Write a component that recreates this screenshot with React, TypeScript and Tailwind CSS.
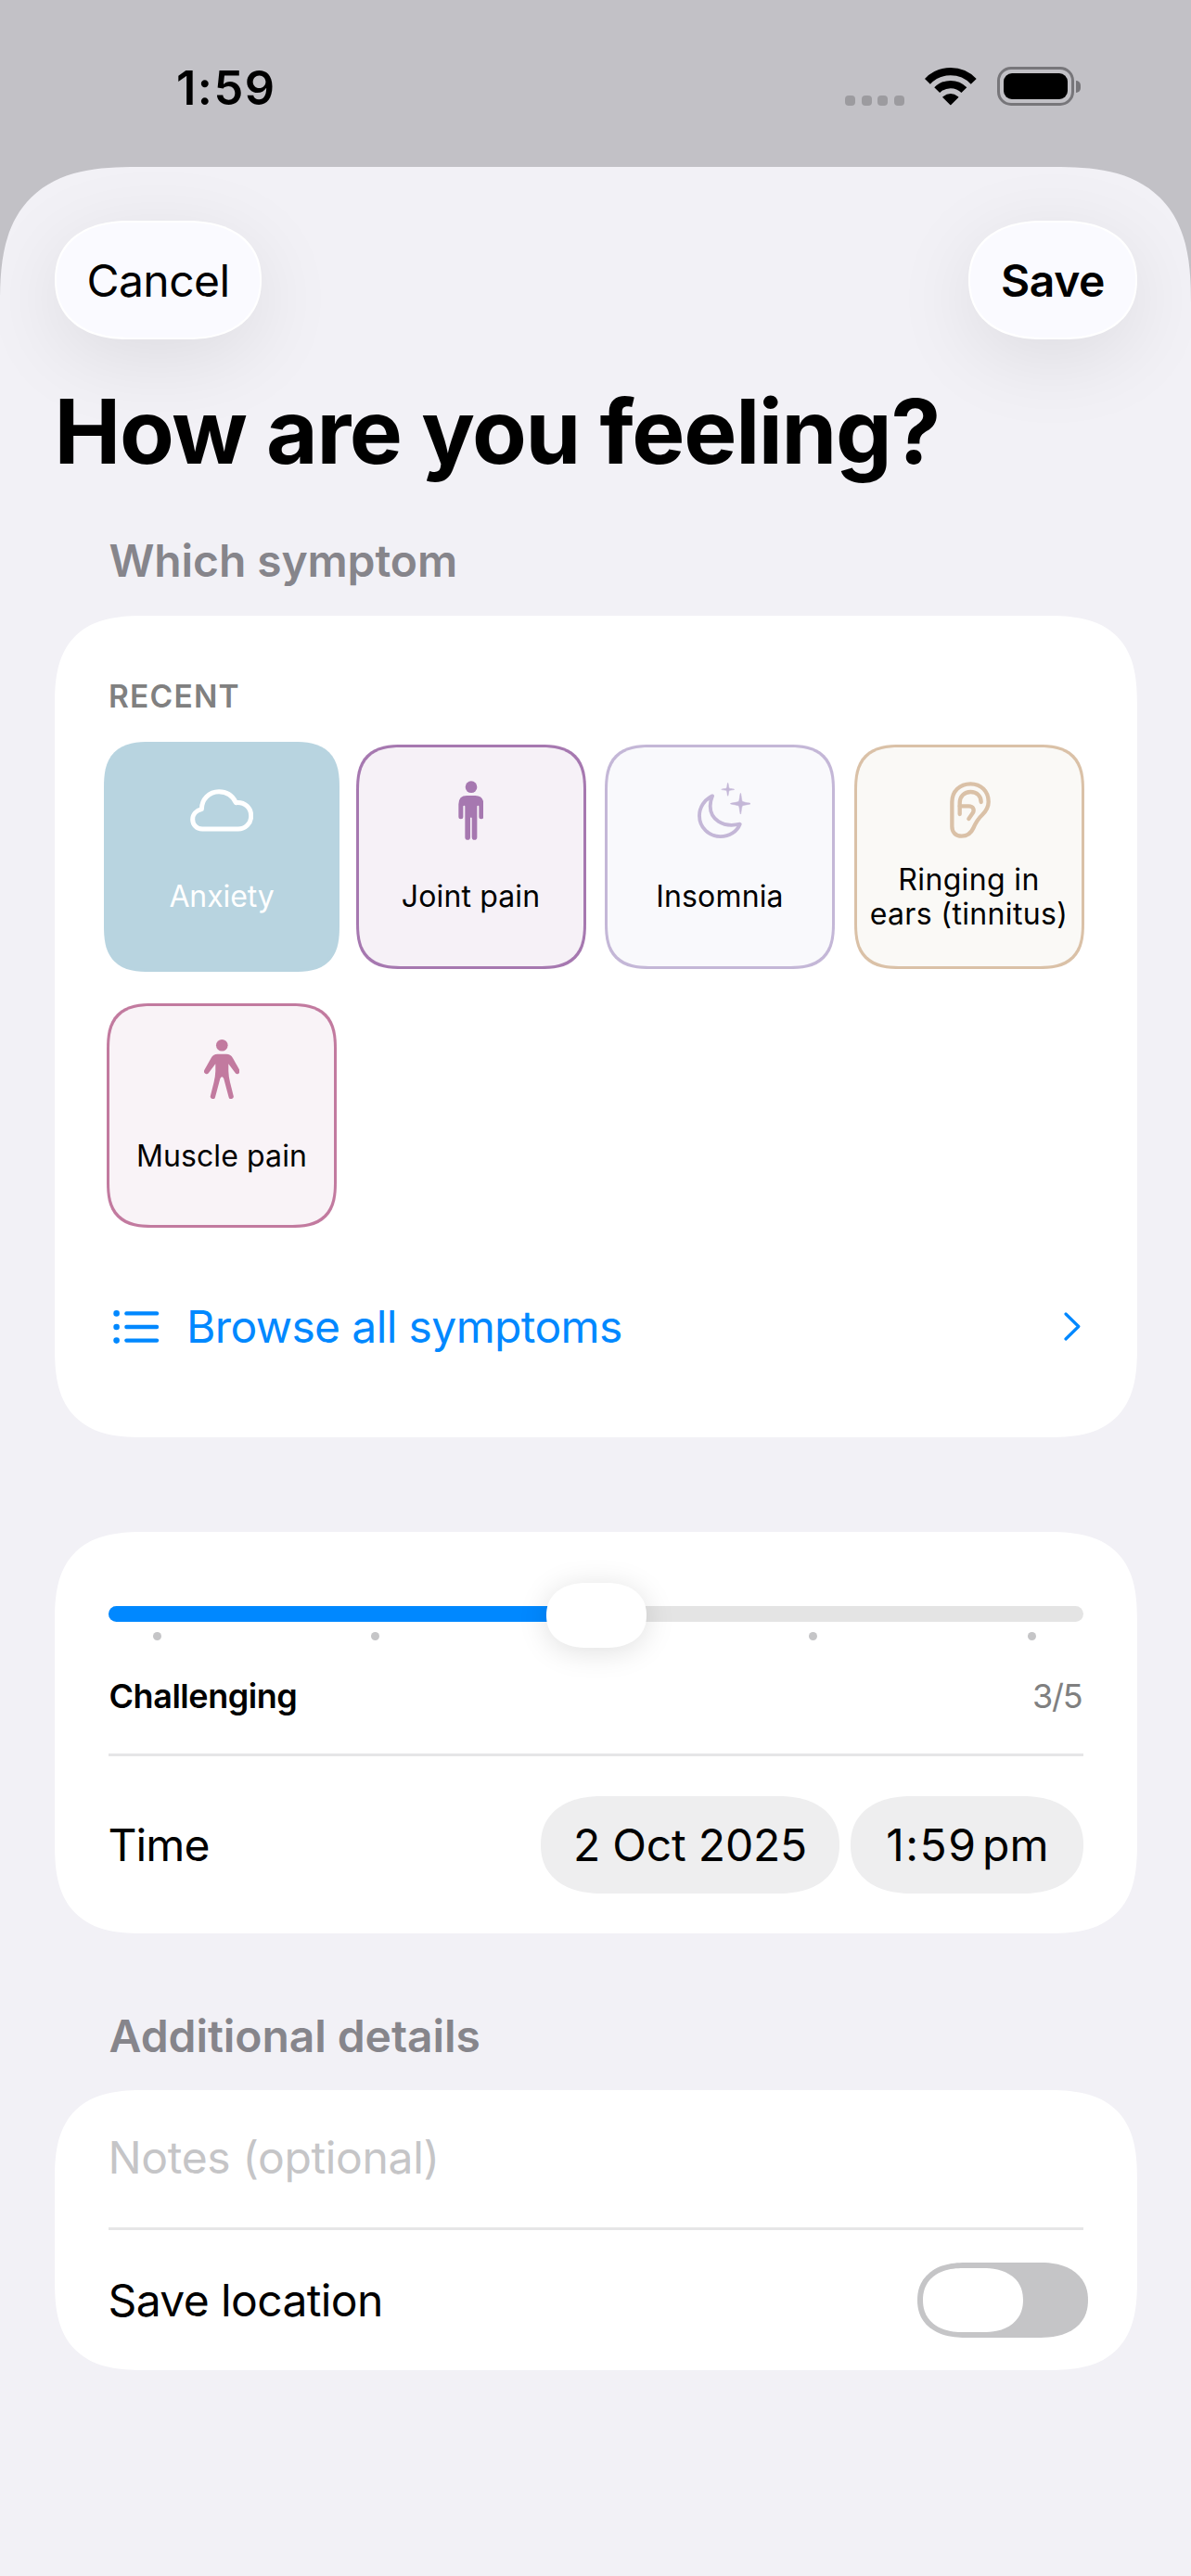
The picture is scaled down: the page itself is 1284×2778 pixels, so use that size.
import type { ReactNode } from "react";

const CloudIcon = () => (
  <svg width="68.4" height="45.7" viewBox="45 65 205 137" fill="none" stroke="currentColor" strokeWidth="15" strokeLinejoin="round">
    <path d="M84 194C66 194 53 180 53 163C53 147 65 134 82 130C82 98 106 73 138 73C163 73 183 87 193 109C222 106 242 126 242 152C242 176 223 194 200 194Z" />
  </svg>
);

const StandingIcon = () => (
  <svg width="27.7" height="64" viewBox="911 36 83 192" fill="currentColor">
    <circle cx="953" cy="56" r="19" />
    <path d="M939 84H966Q993 84 993 112V152A7.5 7.5 0 0 1 978 152V119A3 3 0 0 0 972 119V219A8.5 8.5 0 0 1 955 219V157A2.5 2.5 0 0 0 950 157V219A8.5 8.5 0 0 1 933 219V119A3 3 0 0 0 927 119V152A7.5 7.5 0 0 1 912 152V112Q912 84 939 84Z" />
  </svg>
);

const MoonStarsIcon = () => (
  <svg className="ml-[9px]" width="57.4" height="60.4" viewBox="50 42 172 181" fill="none">
    <path
      d="M98 85C72 97 56 122 56 149C56 187 87 216 124 216C153 216 178 200 187 176C130 189 91 160 91 118C91 104 94 94 98 85Z"
      stroke="currentColor"
      strokeWidth="11.5"
      strokeLinejoin="round"
    />
    <path
      fill="currentColor"
      stroke="currentColor"
      strokeWidth="1.500"
      d="M189 76C191 76 192 98 195 103C200 106 222 108 222 110C222 112 200 114 195 117C192 122 191 144 189 144C187 144 186 122 183 117C178 114 156 112 156 110C156 108 178 106 183 103C186 98 187 76 189 76Z"
    />
    <path
      fill="currentColor"
      stroke="currentColor"
      strokeWidth="1.500"
      d="M148 43C150 43 150 56 152 60C156 62 169 62.500 169 64C169 65.500 156 66 152 68C150 72 150 85 148 85C146 85 146 72 144 68C140 66 127 65.500 127 64C127 62.500 140 62 144 60C146 56 146 43 148 43Z"
    />
  </svg>
);

const EarIcon = () => (
  <svg className="ml-[3px]" width="44.4" height="61" viewBox="867 42 133 183" fill="none" stroke="currentColor" strokeWidth="13" strokeLinecap="round" strokeLinejoin="round">
    <path d="M874 108C874 73 899 49 934 49C968 49 992 73 992 107C992 125 983 138 971 150C957 163 951 174 943 192C935 210 924 218 905 218C886 218 874 206 874 187Z" />
    <path d="M968 108C968 88 954 75 934 75C914 75 899 89 899 110V147" />
    <path d="M899 121H928C943 121 948 133 940 145L928 162" />
  </svg>
);

const ArmsOutIcon = () => (
  <svg width="38.6" height="64" viewBox="0 0 38.6 64" fill="currentColor">
    <circle cx="19.3" cy="6.300" r="6.300" />
    <path d="M14.5 15.800H24Q28.500 15.800 31 20L38.300 33A2.800 2.800 0 0 1 33.600 36L26.300 26.300V34Q26.500 40 28 46L31.700 60.800A2.600 2.600 0 0 1 26.600 62.200L21.200 42Q19.300 38.500 17.400 42L12 62.200A2.600 2.600 0 0 1 6.900 60.800L10.600 46Q12.100 40 12.300 34V26.300L5 36A2.800 2.800 0 0 1 0.300 33L7.600 20Q10.100 15.800 14.500 15.800Z" />
  </svg>
);

const ListIcon = () => (
  <svg width="50" height="36" viewBox="0 0 50 36" fill="currentColor">
    {[3.4, 18, 32.6].map((y) => (
      <g key={y}>
        <circle cx="3.600" cy={y} r="3.300" />
        <rect x="12.200" y={y - 2.2} width="37" height="4.400" rx="2.200" />
      </g>
    ))}
  </svg>
);

const WifiIcon = () => (
  <svg width="55.600" height="41" viewBox="0 0 55.600 41" fill="none" stroke="currentColor" strokeWidth="8.200">
    <path d="M2.900 14.800A34.400 34.400 0 0 1 52.700 14.800" />
    <path d="M13.200 24.200A20.400 20.400 0 0 1 42.400 24.200" />
    <path d="M27.800 39.500L20 31.800Q27.800 25.500 35.600 31.800Z" fill="currentColor" strokeWidth="1.500" strokeLinejoin="round" />
  </svg>
);

type Symptom = { label: ReactNode; key: string; icon: ReactNode; tile: string; text: string };

const symptoms: Symptom[] = [
  { key: "anxiety", label: "Anxiety", icon: <CloudIcon />, tile: "-m-[3px] px-[3px] pt-[5px] pb-[3px] bg-[#b8d4e0] border-[#b8d4e0] text-white", text: "text-white tracking-[-0.1px]" },
  { key: "joint", label: "Joint pain", icon: <StandingIcon />, tile: "pt-[2px] bg-[#f6f1f7] border-[#a678b0] text-[#a678b0]", text: "text-black tracking-[0.12px]" },
  { key: "insomnia", label: "Insomnia", icon: <MoonStarsIcon />, tile: "pt-[2px] bg-[#f9f9fc] border-[#c4b7d7] text-[#c4b7d7]", text: "text-black tracking-[0.16px]" },
  {
    key: "tinnitus",
    label: (
      <>
        Ringing in
        <br />
        ears (tinnitus)
      </>
    ),
    icon: <EarIcon />,
    tile: "pt-[2px] bg-[#faf9f6] border-[#dac1a7] text-[#dac1a7]",
    text: "text-black tracking-[0.35px]",
  },
  { key: "muscle", label: "Muscle pain", icon: <ArmsOutIcon />, tile: "pt-[2px] bg-[#f9f3f7] border-[#c27a9f] text-[#c27a9f]", text: "text-black tracking-[0.1px]" },
];

function SymptomTile({ s }: { s: Symptom }) {
  return (
    <button
      className={`flex flex-col items-center justify-center rounded-[50px] border-[3px] [corner-shape:superellipse(1.44)] ${s.tile}`}
    >
      <span className="flex h-16 items-center justify-center">{s.icon}</span>
      <span className={`mt-[23.500px] mb-0.5 flex h-[76px] items-center justify-center text-center text-[32px] leading-[37.7px] whitespace-nowrap ${s.text}`}>
        <span>{s.label}</span>
      </span>
    </button>
  );
}

function Card({ className, children }: { className: string; children: ReactNode }) {
  return <section className={`rounded-[98px] bg-white [corner-shape:superellipse(1.44)] ${className}`}>{children}</section>;
}

const Divider = ({ className }: { className: string }) => <div className={`h-[3px] bg-[#e6e6e7] ${className}`} />;

export default function App() {
  return (
    <div className="h-[2778px] w-[1284px] overflow-hidden bg-[#c2c1c6] font-['Inter',sans-serif] text-[48px] leading-[58px] text-black">
      <header className="flex h-[180px] items-start justify-between pt-[72px] pr-[119px] pl-[190px]">
        <span className="mt-[-6px] text-[50.500px] leading-[58px] font-semibold tracking-[1.5px]">1:59</span>
        <div className="flex h-[42px]">
          <div className="mr-[22px] flex gap-[6.600px] pt-[30.500px]">
            {[0, 1, 2, 3].map((i) => (
              <i key={i} className="h-[11px] w-[11px] rounded-[4px] bg-[#9c9b9f]" />
            ))}
          </div>
          <span className="mr-[22px] pt-px">
            <WifiIcon />
          </span>
          <div className="h-[42px] w-[83px] rounded-[15px] border-[3px] border-[#77767a] p-1">
            <div className="h-full w-full rounded-[9px] bg-black" />
          </div>
          <div className="mt-[14.500px] ml-[2px] h-[13px] w-[5.500px] rounded-r-full bg-[#77767a]" />
        </div>
      </header>

      <main className="h-[2598px] rounded-t-[148px] bg-[#f2f1f6] px-[58.500px] pt-[58px] [corner-shape:superellipse(1.44)]">
        <div className="flex justify-between">
          <button className="h-32 w-[223px] rounded-[80px/64px] border-2 border-white bg-[#fafaff] pt-0.5 pl-px tracking-[-0.56px] shadow-[0_20px_90px_rgba(0,0,0,0.09)] [corner-shape:superellipse(1.18)]">
            Cancel
          </button>
          <button className="h-32 w-[182px] rounded-[80px/64px] border-2 border-white bg-[#fafaff] pt-0.5 pl-px font-semibold tracking-[-0.42px] shadow-[0_20px_90px_rgba(0,0,0,0.09)] [corner-shape:superellipse(1.18)]">
            Save
          </button>
        </div>

        <h1 className="mt-[41px] text-[96px] leading-[116px] font-bold tracking-[-1.29px] whitespace-nowrap">How are you feeling?</h1>

        <h2 className="mt-[53px] pl-[59px] font-semibold tracking-[-0.12px] text-[#86858b]">Which symptom</h2>

        <Card className="mt-[30px] h-[885.500px] px-[56.500px] pt-[65.500px]">
          <h3 className="pl-[2px] text-[33.500px] leading-[42px] font-semibold tracking-[1.2px] text-[#808080]">RECENT</h3>
          <div className="mt-[31px] grid grid-cols-[repeat(4,248px)] auto-rows-[242px] gap-x-[20.500px] gap-y-[37.500px]">
            {symptoms.map((s) => (
              <SymptomTile key={s.key} s={s} />
            ))}
          </div>
          <button className="mt-[77.500px] flex w-full items-center justify-between pr-[4px] pl-[7px] text-[#0088ff]">
            <span className="flex items-center">
              <ListIcon />
              <span className="ml-[29px] tracking-[-0.62px]">Browse all symptoms</span>
            </span>
            <svg width="18" height="31" viewBox="0 0 18 31" fill="none" stroke="currentColor" strokeWidth="3.200" strokeLinecap="round" strokeLinejoin="round">
              <path d="M2 2L15.800 15.500L2 29" />
            </svg>
          </button>
        </Card>

        <Card className="mt-[102px] h-[433.500px] px-[58px] pt-20">
          <div className="relative h-[17px] overflow-visible rounded-full bg-[#e4e4e4]">
            <div className="h-full w-1/2 rounded-l-full bg-[#0088ff]" />
            <div className="absolute top-[-25px] left-[472px] h-[70px] w-[108px] rounded-[44px/35px] bg-white shadow-[0_4px_32px_rgba(0,0,0,0.13)] [corner-shape:superellipse(1.18)]" />
          </div>
          <div className="mt-[11.500px] flex justify-between pr-[51px] pl-[48px]">
            {[1, 2, 3, 4, 5].map((n) => (
              <i key={n} className={`h-[9px] w-[9px] rounded-full ${n === 3 ? "" : "bg-[#c5c5c7]"}`} />
            ))}
          </div>
          <div className="mt-[37.500px] flex justify-between text-[36px] leading-[44px]">
            <span className="pl-px font-semibold tracking-[-0.45px]">Challenging</span>
            <span className="pr-px tracking-[-1.2px] text-[#808080]">3/5</span>
          </div>
          <Divider className="mt-[40.500px]" />
          <div className="mt-[43px] flex items-center">
            <span className="mr-auto pt-px tracking-[-0.89px]">Time</span>
            <button className="h-[105px] w-[322px] rounded-[66px/52.5px] bg-[#eeeeef] pt-px tracking-[-0.21px] [corner-shape:superellipse(1.18)]">
              2 Oct 2025
            </button>
            <button className="ml-[11.500px] h-[105px] w-[251px] rounded-[66px/52.5px] bg-[#eeeeef] pt-px pl-0.5 [corner-shape:superellipse(1.18)] [word-spacing:-8px]">
              <span className="tracking-[1.5px]">1:59</span> <span className="tracking-[0.2px]">pm</span>
            </button>
          </div>
        </Card>

        <h2 className="mt-[81.500px] pl-[59px] font-semibold tracking-[-0.07px] text-[#86858b]">Additional details</h2>

        <Card className="mt-[29px] h-[302px] px-[58px] pt-11">
          <p className="tracking-[-0.35px] text-[#c5c5c7]">Notes (optional)</p>
          <Divider className="mt-[46px]" />
          <div className="mt-[35px] mr-[-5.500px] flex h-[81px] items-center justify-between">
            <span className="mt-[2px] tracking-[-0.62px]">Save location</span>
            <span className="h-[81px] w-[184px] rounded-[51px/40.5px] bg-[#c5c5c7] p-[6px] [corner-shape:superellipse(1.18)]">
              <span className="block h-full w-[108px] rounded-[43px/34.5px] bg-white [corner-shape:superellipse(1.18)]" />
            </span>
          </div>
        </Card>
      </main>
    </div>
  );
}
